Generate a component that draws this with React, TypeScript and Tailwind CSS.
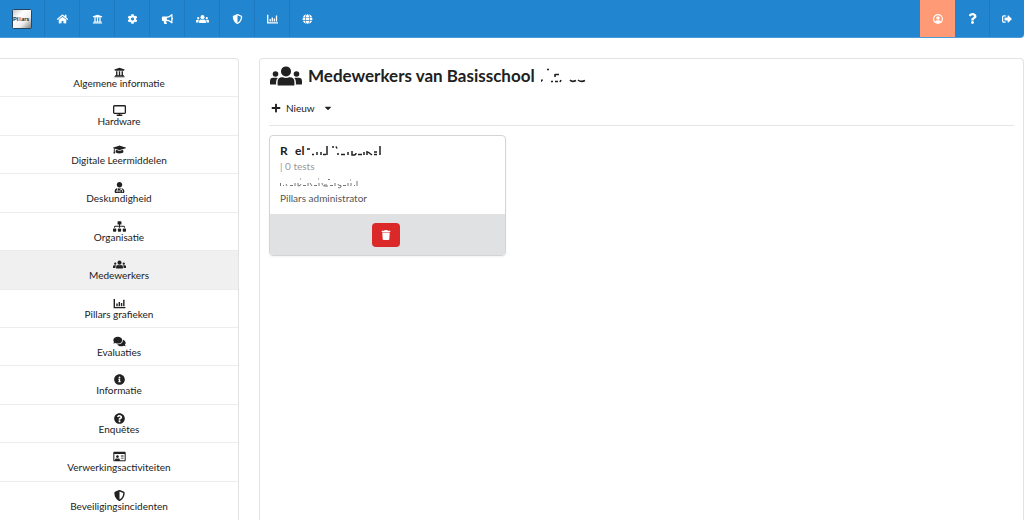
import {
  FaBullhorn, FaCaretDown, FaCog, FaComments, FaGlobe, FaGraduationCap, FaHome,
  FaInfoCircle, FaPlus, FaQuestion, FaQuestionCircle, FaRegIdCard, FaShieldAlt,
  FaSignOutAlt, FaSitemap, FaTrash, FaUniversity, FaUserMd,
} from 'react-icons/fa';

type IconProps = { className?: string };

function Desktop({ className }: IconProps) {
  return (
    <svg viewBox="0 0 12 10" className={className} fill="none" stroke="currentColor" aria-hidden="true">
      <rect x="0.6" y="0.6" width="10.8" height="7" rx="0.7" strokeWidth="1.2" />
      <path d="M6 7.500v1.500M3.400 9.400h5.200" strokeWidth="1.200" />
    </svg>
  );
}

function Users({ className }: IconProps) {
  return (
    <svg viewBox="0 0 32 20" className={className} fill="currentColor" aria-hidden="true">
      <circle cx="16" cy="5.4" r="5" />
      <circle cx="5.5" cy="8" r="2.8" />
      <circle cx="26.5" cy="8" r="2.8" />
      <path d="M7.6 19v-3.2q0-4.6 4.6-4.6h.6q3.2 1.4 6.4 0h.6q4.6 0 4.6 4.6V19q0 .6-.8.6H8.4q-.8 0-.8-.6z" />
      <path d="M0 18v-2.8q0-3.4 3.2-3.4h3.2q.8 0 1.3.3-1.6 1.6-1.6 4V18.600H.8Q0 18.600 0 18z" />
      <path d="M32 18v-2.8q0-3.4-3.2-3.400h-3.200q-.8 0-1.300.3 1.600 1.600 1.600 4V18.600h5.300q.8 0 .8-.6z" />
    </svg>
  );
}

function Chart({ className }: IconProps) {
  return (
    <svg viewBox="0 0 12 10" className={className} fill="none" stroke="currentColor" aria-hidden="true">
      <path d="M1.200.8v8h10.300" strokeWidth="1.300" />
      <path d="M3.700 5v2.600M5.800 3.500v4.100M7.900 4.500v3.100M10 1.500v6.100" strokeWidth="1.300" />
    </svg>
  );
}

function Profile({ className }: IconProps) {
  return (
    <svg viewBox="0 0 12 12" className={className} aria-hidden="true">
      <circle cx="6" cy="6" r="5.300" fill="none" stroke="currentColor" strokeWidth="1.300" />
      <circle cx="6" cy="4.700" r="2.100" fill="currentColor" />
      <path d="M2.400 9.300Q3.200 7.400 4.800 7.400h2.400q1.600 0 2.400 1.900Q8 11 6 11T2.400 9.300z" fill="currentColor" />
    </svg>
  );
}

const navItems = [
  { label: 'Home', Icon: FaHome },
  { label: 'School', Icon: FaUniversity },
  { label: 'Instellingen', Icon: FaCog },
  { label: 'Nieuws', Icon: FaBullhorn },
  { label: 'Medewerkers', Icon: Users },
  { label: 'Beveiliging', Icon: FaShieldAlt },
  { label: 'Grafieken', Icon: Chart },
  { label: 'Website', Icon: FaGlobe },
];

const menuItems = [
  { label: 'Algemene informatie', Icon: FaUniversity },
  { label: 'Hardware', Icon: Desktop },
  { label: 'Digitale Leermiddelen', Icon: FaGraduationCap },
  { label: 'Deskundigheid', Icon: FaUserMd },
  { label: 'Organisatie', Icon: FaSitemap },
  { label: 'Medewerkers', Icon: Users, active: true },
  { label: 'Pillars grafieken', Icon: Chart },
  { label: 'Evaluaties', Icon: FaComments },
  { label: 'Informatie', Icon: FaInfoCircle },
  { label: 'Enquêtes', Icon: FaQuestionCircle },
  { label: 'Verwerkingsactiviteiten', Icon: FaRegIdCard },
  { label: 'Beveiligingsincidenten', Icon: FaShieldAlt },
];

function Logo() {
  return (
    <svg viewBox="0 0 20 20" className="size-5" role="img" aria-label="Pillars">
      <defs>
        <linearGradient id="logo" x1="0" y1="0" x2="1" y2="1">
          <stop offset="0" stopColor="#c4c4c4" />
          <stop offset="0.35" stopColor="#fff" />
          <stop offset="0.65" stopColor="#eee" />
          <stop offset="1" stopColor="#777" />
        </linearGradient>
      </defs>
      <rect x="0.5" y="0.5" width="19" height="19" rx="1" fill="url(#logo)" stroke="#26445e" />
      <text x="1" y="12" fontFamily="Lato, sans-serif" fontSize="6" fontWeight="700" fill="#222">
        Pi<tspan fill="#3a8fc8">l</tspan><tspan fill="#e8763a">l</tspan>ars
      </text>
    </svg>
  );
}

export default function App() {
  return (
    <div className="min-h-screen bg-white text-[10px] text-[#212121]" style={{ fontFamily: 'Lato, sans-serif' }}>
      <nav className="flex h-[38px] rounded-br border-b border-[#4b9bd9] bg-[#2185d0] text-white">
        <a href="#" className="flex w-[45px] items-center justify-center border-r border-[#1e7ac0]">
          <Logo />
        </a>
        {navItems.map(({ label, Icon }) => (
          <a
            key={label}
            href="#"
            aria-label={label}
            className="flex w-[35px] items-center justify-center border-r border-[#1e7ac0] last-of-type:border-0"
          >
            <Icon className="h-[10px] w-[13px]" />
          </a>
        ))}
        <div className="ml-auto flex">
          <a href="#" aria-label="Profiel" className="flex w-[35px] items-center justify-center bg-[#fe9a76]">
            <Profile className="size-[10px]" />
          </a>
          <a href="#" aria-label="Help" className="flex w-[35px] items-center justify-center border-r border-[#1e7ac0]">
            <FaQuestion className="size-[11px]" />
          </a>
          <a href="#" aria-label="Uitloggen" className="flex w-[34px] items-center justify-center">
            <FaSignOutAlt className="size-[10px]" />
          </a>
        </div>
      </nav>

      <div className="flex items-stretch pt-5">
        <aside className="grid min-h-[462px] w-[239px] shrink-0 auto-rows-fr self-start rounded-tr border-t border-r border-[#e3e3e4]">
          {menuItems.map(({ label, Icon, active }) => (
            <a
              key={label}
              href="#"
              className={
                active
                  ? 'flex flex-col items-center border-b border-[#ececec] bg-[#f0f0f0] pt-2'
                  : 'flex flex-col items-center border-b border-[#ececec] pt-2 last:border-0'
              }
            >
              <Icon className="h-[11px] w-[13px]" />
              <span className="leading-[10px]">{label}</span>
            </a>
          ))}
        </aside>

        <main className="ml-5 min-h-[462px] flex-1 rounded-t border border-b-0 border-[#e3e3e4] px-[9px] pt-[7px]">
          <h1 className="flex h-5 items-center pl-px text-[17px] font-bold">
            <Users className="mr-[6px] h-5 w-8" />
            Medewerkers van Basisschool
            <svg viewBox="0 0 46 16" className="ml-[6px] h-4 w-[46px]" fill="none" stroke="currentColor" strokeWidth="1.6" aria-hidden="true">
              <path d="M0 13.500l1.500-2M6 1.500h2M10 13.500h2M14 13.500h3M14 6v3M14 6.500h4M20 12l-1 2M29 12q2 2.500 6 .5M37 12q3 2.500 7 .5" />
            </svg>
          </h1>
          <button type="button" className="mt-[10px] flex h-6 items-center px-[2px]">
            <FaPlus className="mr-[5px] size-[10px]" />
            Nieuw
            <FaCaretDown className="ml-2 size-[10px]" />
          </button>
          <hr className="mt-[5px] border-[#e6e6e6]" />

          <section className="mt-[9px] w-[237px] overflow-hidden rounded border border-[#d4d4d5] shadow-xs">
            <div className="px-[10px] pt-2 pb-2">
              <div className="flex h-[14px] items-center text-[12px] leading-[14px] font-bold">
                <span className="w-[15px]">R</span>
                <span>el</span>
                <svg viewBox="0 0 76 12" className="ml-px h-3 w-[76px]" fill="none" stroke="currentColor" strokeWidth="1.5" aria-hidden="true">
                  <path d="M2 4h3M7 9.500h2M12 7v3M16 7v3M18 9.500h3M22 1v9M27 2h2M31 1.500l1 2M32 9h2M36 9.500h4M43 7v3M47 6v4q4 .5 4-2M53 9.500h4M59 7v3M62 6v4M63 7l4 3M69 9.500h3M69 7h3M75 1v9" />
                </svg>
              </div>
              <p className="leading-[16px] text-[#999]">| 0 tests</p>
              <svg viewBox="0 0 80 12" className="mt-1 h-3 w-20" fill="none" stroke="#777" aria-hidden="true">
                <path d="M.5 5v3M3 7.500h1M6 6l1 2M10 7.500h3M15 5v3M18 5v3q3 0 3-2M23 7.500h3M28 5v3M30 5l2 3M34 7.500h3M39 5v3M42 5q0 4 6 3M44 7h3M50 7.500h3M55 5v3M58 6q0 2 3 1.500v1.500q-2 1.500-3 .5M63 7.500h3M68 5v3M71 5v3M74 7.500h1M77 3v5M20 1h1M38 1h1M48 1.500h2M70 2h1" />
              </svg>
              <p className="leading-[16px] text-[#555]">Pillars administrator</p>
            </div>
            <div className="flex h-[41px] items-center justify-center bg-[#dfe1e2]">
              <button type="button" aria-label="Verwijderen" className="mr-1 flex h-6 w-7 items-center justify-center rounded-sm bg-[#db2828] text-white">
                <FaTrash className="size-[10px]" />
              </button>
            </div>
          </section>
        </main>
      </div>
    </div>
  );
}
